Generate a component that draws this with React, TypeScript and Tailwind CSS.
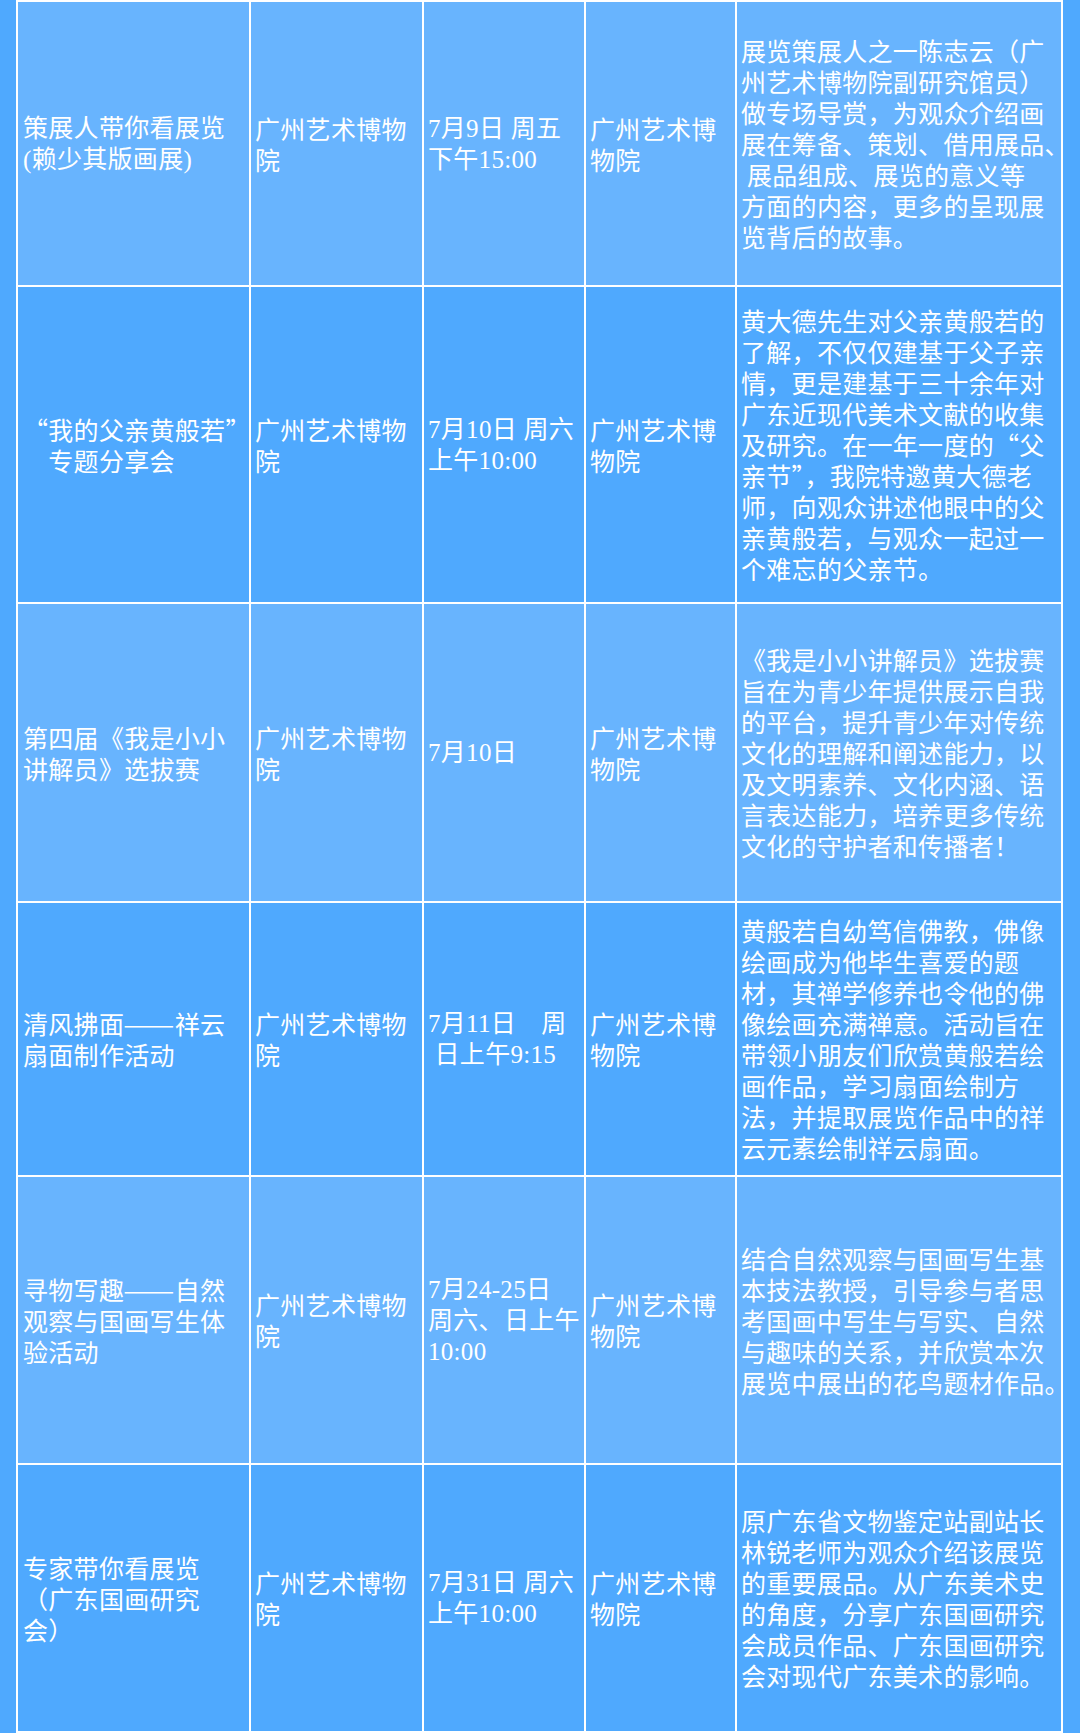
const SERIF = "font-['Liberation_Serif','Noto_Sans_CJK_SC',serif]";
const CJK = "font-['Noto_Sans_CJK_SC','Liberation_Serif',sans-serif]";

type Row = {
  light: boolean;
  title: string[];
  titleSerif?: boolean;
  date: string[];
  desc: string[];
};

const ROWS: Row[] = [
  {
    light: true,
    title: ["策展人带你看展览", "(赖少其版画展)"],
    titleSerif: true,
    date: ["7月9日 周五", "下午15:00"],
    desc: [
      "展览策展人之一陈志云（广",
      "州艺术博物院副研究馆员）",
      "做专场导赏，为观众介绍画",
      "展在筹备、策划、借用展品、",
      "\u00a0展品组成、展览的意义等",
      "方面的内容，更多的呈现展",
      "览背后的故事。",
    ],
  },
  {
    light: false,
    title: ["“我的父亲黄般若”", "　专题分享会"],
    date: ["7月10日 周六", "上午10:00"],
    desc: [
      "黄大德先生对父亲黄般若的",
      "了解，不仅仅建基于父子亲",
      "情，更是建基于三十余年对",
      "广东近现代美术文献的收集",
      "及研究。在一年一度的“父",
      "亲节”，我院特邀黄大德老",
      "师，向观众讲述他眼中的父",
      "亲黄般若，与观众一起过一",
      "个难忘的父亲节。",
    ],
  },
  {
    light: true,
    title: ["第四届《我是小小", "讲解员》选拔赛"],
    date: ["7月10日"],
    desc: [
      "《我是小小讲解员》选拔赛",
      "旨在为青少年提供展示自我",
      "的平台，提升青少年对传统",
      "文化的理解和阐述能力，以",
      "及文明素养、文化内涵、语",
      "言表达能力，培养更多传统",
      "文化的守护者和传播者！",
    ],
  },
  {
    light: false,
    title: ["清风拂面——祥云", "扇面制作活动"],
    date: ["7月11日　周", "\u00a0日上午9:15"],
    desc: [
      "黄般若自幼笃信佛教，佛像",
      "绘画成为他毕生喜爱的题",
      "材，其禅学修养也令他的佛",
      "像绘画充满禅意。活动旨在",
      "带领小朋友们欣赏黄般若绘",
      "画作品，学习扇面绘制方",
      "法，并提取展览作品中的祥",
      "云元素绘制祥云扇面。",
    ],
  },
  {
    light: true,
    title: ["寻物写趣——自然", "观察与国画写生体", "验活动"],
    date: ["7月24-25日", "周六、日上午", "10:00"],
    desc: [
      "结合自然观察与国画写生基",
      "本技法教授，引导参与者思",
      "考国画中写生与写实、自然",
      "与趣味的关系，并欣赏本次",
      "展览中展出的花鸟题材作品。",
    ],
  },
  {
    light: false,
    title: ["专家带你看展览", "（广东国画研究", "会）"],
    date: ["7月31日 周六", "上午10:00"],
    desc: [
      "原广东省文物鉴定站副站长",
      "林锐老师为观众介绍该展览",
      "的重要展品。从广东美术史",
      "的角度，分享广东国画研究",
      "会成员作品、广东国画研究",
      "会对现代广东美术的影响。",
    ],
  },
];

// em dashes in Noto are narrower than the full-width ones in the screenshot
function Line({ text }: { text: string }) {
  const parts = text.split("——");
  if (parts.length === 1) return <div>{text}</div>;
  return (
    <div>
      {parts[0]}
      <span className="inline-block w-[50.6px] text-center overflow-visible">
        <span className="inline-block scale-x-[1.22]">——</span>
      </span>
      {parts[1]}
    </div>
  );
}

function Cell({ lines, light, serif, pad }: { lines: string[]; light: boolean; serif?: boolean; pad?: boolean }) {
  return (
    <div
      className={`${light ? "bg-[#68b4fe]" : "bg-[#4fa9fe]"} flex items-center overflow-visible ${pad ? "pl-[5px]" : "pl-[4px]"}`}
    >
      <div className={`${serif ? SERIF : CJK} text-white text-[25px] leading-[31px] tracking-[0.3px] whitespace-nowrap`}>
        {lines.map((l, i) => (
          <Line key={i} text={l} />
        ))}
      </div>
    </div>
  );
}

export default function App() {
  return (
    <div className="w-[1080px] h-[1733px] bg-[#4fa9fe] flex pl-[16px] overflow-hidden">
      <div className="grid grid-cols-[231px_171px_160px_149px_324px] grid-rows-[283px_315px_297px_272px_286px_266px] gap-[2px] p-[2px] bg-white">
        {ROWS.map((r, i) => (
          <div key={i} className="contents">
            <Cell lines={r.title} light={r.light} serif={r.titleSerif} pad />
            <Cell lines={["广州艺术博物", "院"]} light={r.light} />
            <Cell lines={r.date} light={r.light} serif />
            <Cell lines={["广州艺术博", "物院"]} light={r.light} />
            <Cell lines={r.desc} light={r.light} />
          </div>
        ))}
      </div>
    </div>
  );
}
